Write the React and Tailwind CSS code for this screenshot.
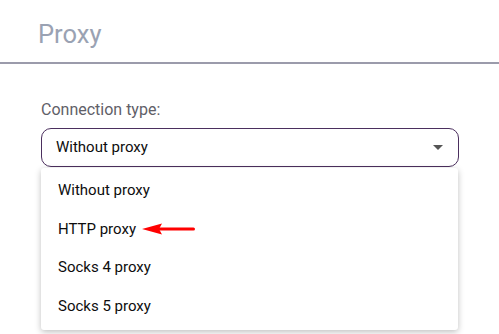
export default function App() {
  return (
    <div className="w-[499px] h-[334px] bg-white overflow-hidden relative" style={{ fontFamily: "Roboto, 'Liberation Sans', sans-serif" }}>
      <div className="h-[64px] flex items-center pl-[38px] pt-[7px] border-b-2 border-[#9b9bab]">
        <span className="text-[25.5px] text-[#9aa2b3] leading-none">Proxy</span>
      </div>
      <div className="pl-[41px] pr-[40px] pt-[38px]">
        <div className="text-[16px] text-[#5f6068] leading-none mb-[10px]">Connection type:</div>
        <div className="relative">
          <div className="h-[39px] border border-[#4b2f5e] rounded-[10px] flex items-center justify-between pl-[14px] pr-[15px]">
            <span className="text-[15px] text-[#0d0d0d]">Without proxy</span>
            <svg width="10" height="5" viewBox="0 0 10 5"><path d="M0 0h10L5 5z" fill="#555" /></svg>
          </div>
          <div className="absolute left-0 w-[417px] top-[40px] bg-white rounded-[3px] shadow-[0_2px_6px_rgba(0,0,0,0.25)] pt-[3px] pb-[5px] z-10">
            {["Without proxy", "HTTP proxy", "Socks 4 proxy", "Socks 5 proxy"].map((t, i) => (
              <div key={t} className="h-[38.5px] flex items-center pl-[17px] text-[15px] text-[#0d0d0d]">
                <span>{t}</span>
                {i === 1 && (
                  <svg className="ml-[6px]" width="54" height="12" viewBox="0 0 54 12">
                    <path d="M17 4.5h34.5a1.5 1.5 0 0 1 0 3H17z" fill="#f00" />
                    <path d="M0 6 L20 0.5 L17 6 L20 11.5 Z" fill="#f00" />
                  </svg>
                )}
              </div>
            ))}
          </div>
        </div>
      </div>
    </div>
  );
}
